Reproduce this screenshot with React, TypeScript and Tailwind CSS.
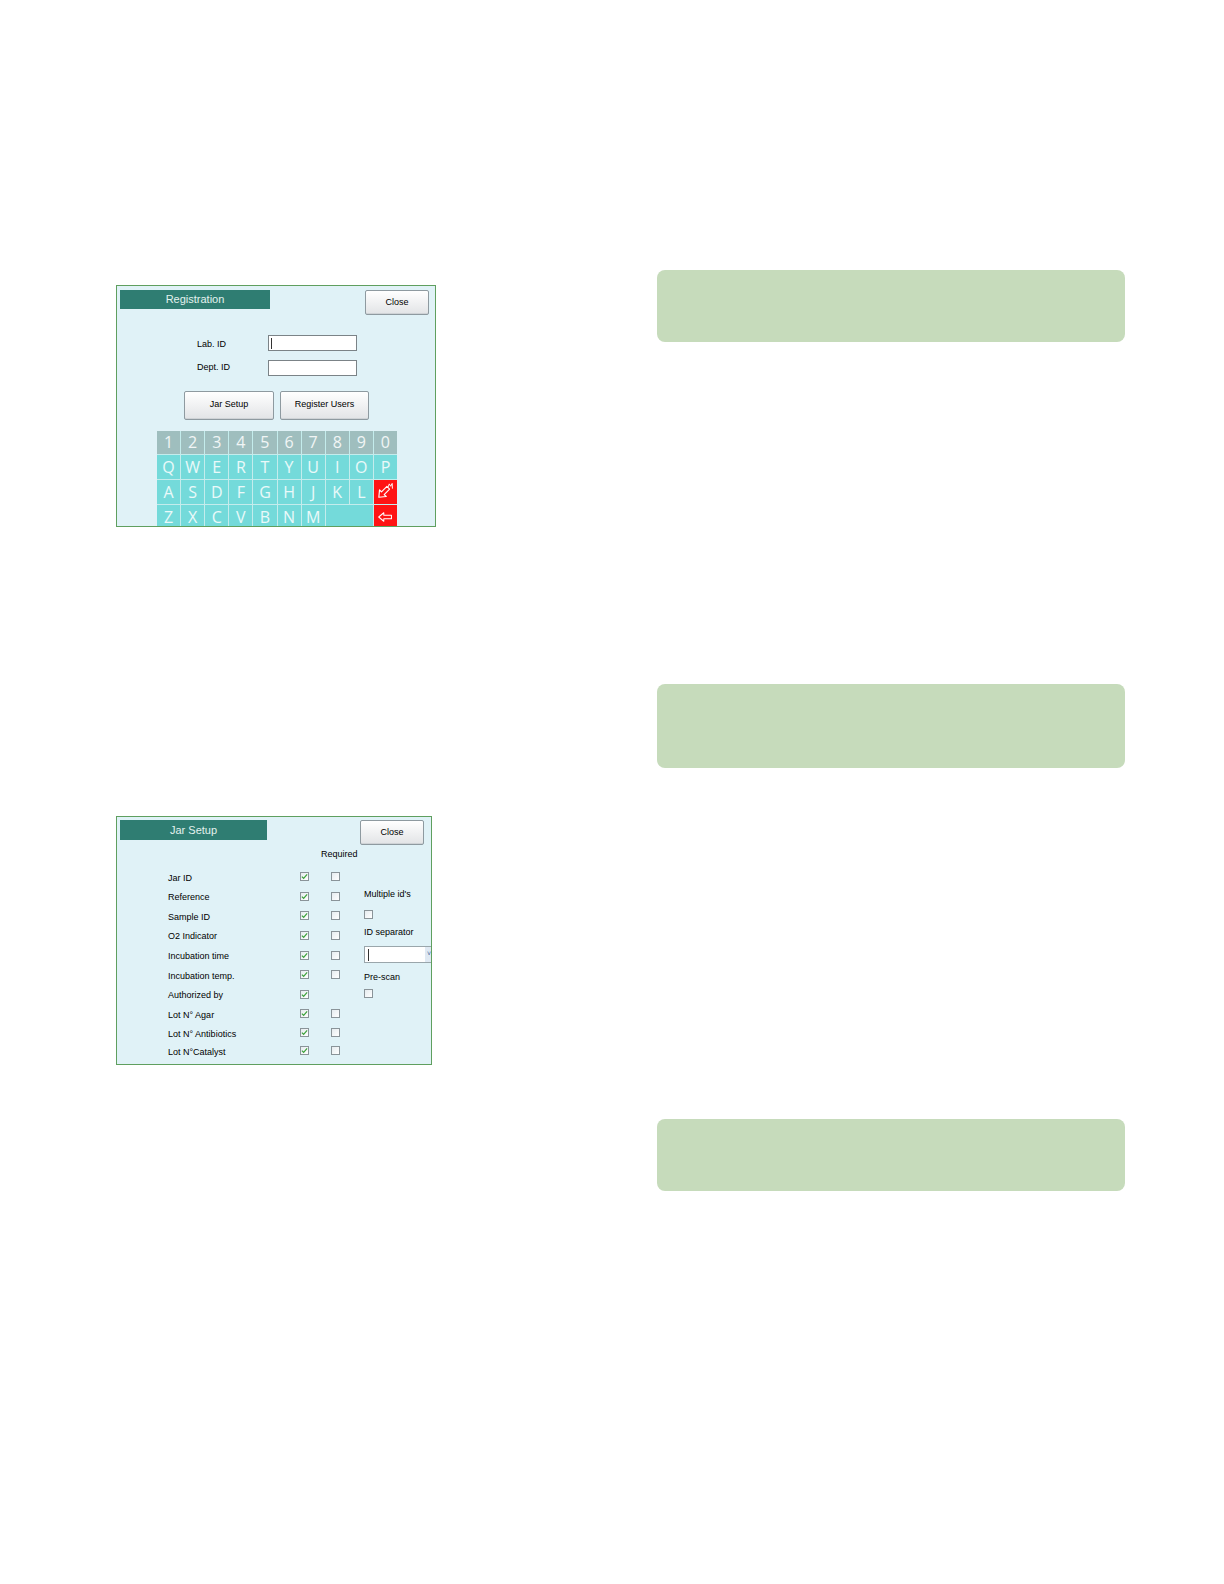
import React from 'react';

const font = { fontFamily: '"Liberation Sans", Arial, sans-serif' };

const Btn: React.FC<{ label: string; className?: string }> = ({ label, className = '' }) => (
  <div
    className={`flex items-center justify-center rounded-[2px] border border-[#8e9aa0] bg-gradient-to-b from-white to-[#e2e4e6] text-[9px] text-black shadow-[inset_0_-1px_0_#cfd3d6] ${className}`}
  >
    {label}
  </div>
);

const Box: React.FC<{ checked?: boolean }> = ({ checked }) => (
  <div className="relative flex h-[9px] w-[9px] items-center justify-center border border-[#8a9499] bg-gradient-to-br from-[#e6ecef] to-white">
    {checked && (
      <svg viewBox="0 0 8 8" className="absolute h-[7px] w-[7px]">
        <path d="M1 4.2 L3 6.2 L7 1.5" fill="none" stroke="#3aa13a" strokeWidth="1.4" />
      </svg>
    )}
  </div>
);

// enter key: hollow arrow pointing down-left with a little hook on the tail
const EnterIcon = () => (
  <svg viewBox="0 0 20 20" className="h-[19px] w-[19px]">
    <path
      d="M3 16 L10.8 15.3 L8.6 13.2 L14.3 7.5 L11.5 4.7 L5.8 10.4 L3.7 8.2 Z"
      fill="none"
      stroke="white"
      strokeWidth="1.2"
      strokeLinejoin="round"
    />
    <path d="M12.8 5.2 L14 2 L15.5 4.5 L17 1.5 L17.3 7" fill="none" stroke="white" strokeWidth="1" strokeLinejoin="round" />
  </svg>
);

const BackIcon = () => (
  <svg viewBox="0 0 20 14" className="h-[12px] w-[17px]">
    <path d="M2 7 L8 2 L8 5 L17 5 L17 9 L8 9 L8 12 Z" fill="none" stroke="white" strokeWidth="1.2" strokeLinejoin="round" />
  </svg>
);

const Keyboard = () => {
  const nums = ['1', '2', '3', '4', '5', '6', '7', '8', '9', '0'];
  const r1 = ['Q', 'W', 'E', 'R', 'T', 'Y', 'U', 'I', 'O', 'P'];
  const r2 = ['A', 'S', 'D', 'F', 'G', 'H', 'J', 'K', 'L'];
  const r3 = ['Z', 'X', 'C', 'V', 'B', 'N', 'M'];
  const key = 'flex items-center justify-center text-[16px] text-white/85';
  return (
    <div
      className="grid w-[240px] grid-cols-10 grid-rows-[23px_24px_24px_24px] gap-px bg-[#c4ecec]"
      style={{ fontFamily: '"Open Sans", "Noto Sans", sans-serif' }}
    >
      {nums.map((k) => (
        <div key={k} className={`${key} bg-[#9fbebe]`}>{k}</div>
      ))}
      {r1.map((k) => (
        <div key={k} className={`${key} bg-[#74dada]`}>{k}</div>
      ))}
      {r2.map((k) => (
        <div key={k} className={`${key} bg-[#74dada]`}>{k}</div>
      ))}
      <div className={`${key} bg-[#ff1414]`}><EnterIcon /></div>
      {r3.map((k) => (
        <div key={k} className={`${key} bg-[#74dada]`}>{k}</div>
      ))}
      <div className="col-span-2 bg-[#74dada]" />
      <div className={`${key} bg-[#ff1414]`}><BackIcon /></div>
    </div>
  );
};

const Registration = () => (
  <div className="h-[242px] w-[320px] overflow-hidden border border-[#5f9f5f] bg-[#e0f2f7]" style={font}>
    <div className="flex pl-[3px] pr-[6px] pt-[4px]">
      <div className="flex h-[19px] w-[150px] items-center justify-center bg-[#2f7d72] text-[11px] text-[#e4f2ef]">
        Registration
      </div>
      <Btn label="Close" className="ml-auto h-[25px] w-[64px]" />
    </div>
    <div className="mt-[20px] flex flex-col gap-[8px] pl-[80px]">
      <div className="flex items-center">
        <span className="w-[71px] pt-[3px] text-[9px] text-black">Lab. ID</span>
        <div className="flex h-[16px] w-[89px] items-center border border-[#7b8387] bg-white pl-[2px]">
          <div className="h-[11px] w-px bg-[#333]" />
        </div>
      </div>
      <div className="flex items-center">
        <span className="w-[71px] text-[9px] text-black">Dept. ID</span>
        <div className="h-[16px] w-[89px] border border-[#7b8387] bg-white" />
      </div>
    </div>
    <div className="mt-[15px] flex gap-[6px] pl-[67px]">
      <Btn label="Jar Setup" className="h-[29px] w-[90px]" />
      <Btn label="Register Users" className="h-[29px] w-[89px]" />
    </div>
    <div className="mt-[11px] pl-[40px]">
      <Keyboard />
    </div>
  </div>
);

const rows: { label: string; second: boolean }[] = [
  { label: 'Jar ID', second: true },
  { label: 'Reference', second: true },
  { label: 'Sample ID', second: true },
  { label: 'O2 Indicator', second: true },
  { label: 'Incubation time', second: true },
  { label: 'Incubation temp.', second: true },
  { label: 'Authorized by', second: false },
  { label: 'Lot N\u00b0 Agar', second: true },
  { label: 'Lot N\u00b0 Antibiotics', second: true },
  { label: 'Lot N\u00b0Catalyst', second: true },
];
const rowH = ['h-[19px]', 'h-[20px]', 'h-[19px]', 'h-[20px]', 'h-[20px]', 'h-[19px]', 'h-[20px]', 'h-[19px]', 'h-[19px]', 'h-[17px]'];

const JarSetup = () => (
  <div className="h-[249px] w-[316px] overflow-hidden border border-[#5f9f5f] bg-[#e0f2f7]" style={font}>
    <div className="flex pl-[3px] pr-[7px] pt-[3px]">
      <div className="flex h-[20px] w-[147px] items-center justify-center bg-[#2f7d72] text-[11px] text-[#e4f2ef]">
        Jar Setup
      </div>
      <Btn label="Close" className="ml-auto h-[25px] w-[64px]" />
    </div>
    <div className="mt-[4px] pl-[204px] text-[9px] leading-[11px] text-black">Required</div>
    <div className="mt-[8px] flex">
      <div className="flex flex-col pl-[51px]">
        {rows.map((r, i) => (
          <div key={r.label} className={`flex items-center ${rowH[i]}`}>
            <span className="w-[132px] pt-[2px] text-[9px] text-black">{r.label}</span>
            <div className="-mt-[2px]"><Box checked /></div>
            <div className="-mt-[2px] ml-[22px] w-[9px]">{r.second && <Box />}</div>
          </div>
        ))}
      </div>
      <div className="ml-[24px] flex flex-col pt-[21px] text-[9px] text-black">
        <span className="leading-[11px]">Multiple id's</span>
        <div className="mt-[10px]"><Box /></div>
        <span className="mt-[8px] leading-[11px]">ID separator</span>
        <div className="mt-[8px] flex h-[17px] w-[70px] items-center border border-[#9aa6ab] bg-white">
          <div className="ml-[3px] h-[12px] w-px bg-[#333]" />
          <div className="ml-auto flex h-full w-[8px] items-center justify-center bg-[#dfe9f3] text-[7px] text-[#4a6a9a]">
            ˅
          </div>
        </div>
        <span className="mt-[9px] leading-[11px]">Pre-scan</span>
        <div className="mt-[6px]"><Box /></div>
      </div>
    </div>
  </div>
);

export default function App() {
  return (
    <div className="flex w-full bg-white pb-[390px]">
      <div className="ml-[116px] flex w-[320px] flex-col pt-[285px]">
        <Registration />
        <div className="mt-[289px]">
          <JarSetup />
        </div>
      </div>
      <div className="ml-[221px] flex w-[468px] flex-col pt-[270px]">
        <div className="h-[72px] rounded-[8px] bg-[#c6dbbb]" />
        <div className="mt-[342px] h-[84px] rounded-[8px] bg-[#c6dbbb]" />
        <div className="mt-[351px] h-[72px] rounded-[8px] bg-[#c6dbbb]" />
      </div>
    </div>
  );
}
